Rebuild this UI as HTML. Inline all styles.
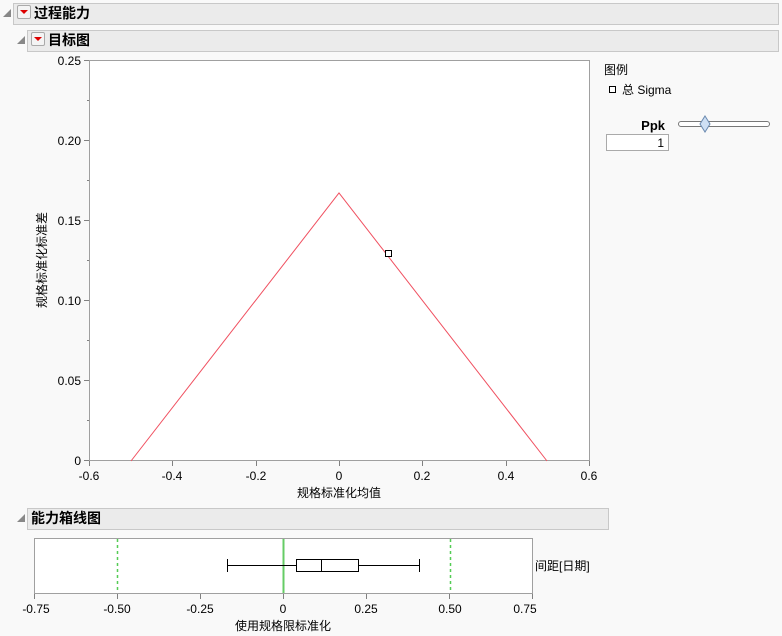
<!DOCTYPE html>
<html><head><meta charset="utf-8"><style>
body{margin:0;width:782px;height:636px;background:#f9f9f9;font-family:"Liberation Sans","Noto Sans CJK SC",sans-serif;position:relative;overflow:hidden;font-size:12px;color:#000}
.abs{position:absolute}
.hdr{position:absolute;background:#ebebeb;border:1px solid #c8c8c8;font-weight:bold;font-size:14px;line-height:19px;box-sizing:border-box}
.btn{display:inline-block;width:12px;height:12px;border:1px solid #aaa;background:#f4f4f4;border-radius:2px;vertical-align:-1px;margin:0 3px 0 3px;position:relative}
.btn:after{content:"";position:absolute;left:2px;top:4px;border-left:4px solid transparent;border-right:4px solid transparent;border-top:4px solid #d00}
.tri{position:absolute;width:0;height:0;border-left:8px solid transparent;border-bottom:8px solid #888}
</style></head><body>
<div class="tri" style="left:3px;top:9px"></div>
<div class="hdr" style="left:13px;top:3px;width:766px;height:22px"><span class="btn"></span>过程能力</div>
<div class="tri" style="left:17px;top:36px"></div>
<div class="hdr" style="left:27px;top:30px;width:752px;height:22px"><span class="btn"></span>目标图</div>

<svg class="abs" style="left:0;top:0" width="782" height="636">
<rect x="89.5" y="60.5" width="500" height="400" fill="#fff" stroke="#a0a0a0"/>
<g stroke="#808080">
<line x1="84" y1="60.5" x2="89" y2="60.5"/><line x1="84" y1="140.5" x2="89" y2="140.5"/><line x1="84" y1="220.5" x2="89" y2="220.5"/><line x1="84" y1="300.5" x2="89" y2="300.5"/><line x1="84" y1="380.5" x2="89" y2="380.5"/><line x1="84" y1="460.5" x2="89" y2="460.5"/>
<line x1="87" y1="100.5" x2="89" y2="100.5"/><line x1="87" y1="180.5" x2="89" y2="180.5"/><line x1="87" y1="260.5" x2="89" y2="260.5"/><line x1="87" y1="340.5" x2="89" y2="340.5"/><line x1="87" y1="420.5" x2="89" y2="420.5"/>
<line x1="89.5" y1="461" x2="89.5" y2="466"/><line x1="172.5" y1="461" x2="172.5" y2="466"/><line x1="256.5" y1="461" x2="256.5" y2="466"/><line x1="339.5" y1="461" x2="339.5" y2="466"/><line x1="422.5" y1="461" x2="422.5" y2="466"/><line x1="506.5" y1="461" x2="506.5" y2="466"/><line x1="589.5" y1="461" x2="589.5" y2="466"/>
</g>
<polyline points="131,461 339,193 547,461" fill="none" stroke="#f05060" stroke-width="1"/>
<rect x="385.5" y="250.5" width="6" height="6" fill="#fff" stroke="#000"/>
<g font-size="12" text-anchor="end" font-family="Liberation Sans,sans-serif">
<text x="81" y="65">0.25</text><text x="81" y="145">0.20</text><text x="81" y="225">0.15</text><text x="81" y="305">0.10</text><text x="81" y="385">0.05</text><text x="81" y="465">0</text>
</g>
<g font-size="12" text-anchor="middle" font-family="Liberation Sans,sans-serif">
<text x="89" y="480">-0.6</text><text x="172" y="480">-0.4</text><text x="256" y="480">-0.2</text><text x="339" y="480">0</text><text x="422" y="480">0.2</text><text x="506" y="480">0.4</text><text x="589" y="480">0.6</text>
</g>
<text x="339" y="497" font-size="12" text-anchor="middle">规格标准化均值</text>
<text transform="translate(46,260) rotate(-90)" font-size="12" text-anchor="middle">规格标准化标准差</text>

<text x="604" y="74" font-size="12">图例</text>
<rect x="609.5" y="86.5" width="6" height="6" fill="#fff" stroke="#000"/>
<text x="622" y="94" font-size="12">总 Sigma</text>
<text x="665" y="130" font-size="13" font-weight="bold" text-anchor="end">Ppk</text>
<rect x="678.5" y="121.5" width="91" height="5" rx="2.5" fill="#fff" stroke="#777"/>
<polygon points="705,116 710,124 705,132 700,124" fill="#cfe0f4" stroke="#6a8ab0"/>
<rect x="606.5" y="134.5" width="62" height="16" fill="#fff" stroke="#aaa"/>
<text x="664" y="147" font-size="12" text-anchor="end">1</text>

<rect x="34.5" y="538.5" width="498" height="55" fill="#fff" stroke="#a0a0a0"/>
<line x1="117.5" y1="539" x2="117.5" y2="593" stroke="#5c5" stroke-dasharray="3,3" stroke-width="1.5"/>
<line x1="450.5" y1="539" x2="450.5" y2="593" stroke="#5c5" stroke-dasharray="3,3" stroke-width="1.5"/>
<line x1="283.5" y1="539" x2="283.5" y2="593" stroke="#6c6" stroke-width="2"/>
<g stroke="#000" fill="none">
<line x1="227.5" y1="565.5" x2="296" y2="565.5"/><line x1="358" y1="565.5" x2="419.5" y2="565.5"/>
<line x1="227.5" y1="559" x2="227.5" y2="572"/><line x1="419.5" y1="559" x2="419.5" y2="572"/>
<rect x="296.5" y="559.5" width="62" height="12"/><line x1="321.5" y1="559.5" x2="321.5" y2="571.5"/>
</g>
<g stroke="#808080">
<line x1="34.5" y1="594" x2="34.5" y2="599"/><line x1="117.5" y1="594" x2="117.5" y2="599"/><line x1="200.5" y1="594" x2="200.5" y2="599"/><line x1="283.5" y1="594" x2="283.5" y2="599"/><line x1="366.5" y1="594" x2="366.5" y2="599"/><line x1="449.5" y1="594" x2="449.5" y2="599"/><line x1="532.5" y1="594" x2="532.5" y2="599"/>
</g>
<g font-size="12" text-anchor="middle" font-family="Liberation Sans,sans-serif">
<text x="36" y="613">-0.75</text><text x="117" y="613">-0.50</text><text x="200" y="613">-0.25</text><text x="283" y="613">0</text><text x="366" y="613">0.25</text><text x="450" y="613">0.50</text><text x="525" y="613">0.75</text>
</g>
<text x="283" y="630" font-size="12" text-anchor="middle">使用规格限标准化</text>
<text x="535" y="570" font-size="12">间距[日期]</text>
</svg>
<div class="tri" style="left:17px;top:514px"></div>
<div class="hdr" style="left:27px;top:508px;width:582px;height:22px;padding-left:3px">能力箱线图</div>
</body></html>
